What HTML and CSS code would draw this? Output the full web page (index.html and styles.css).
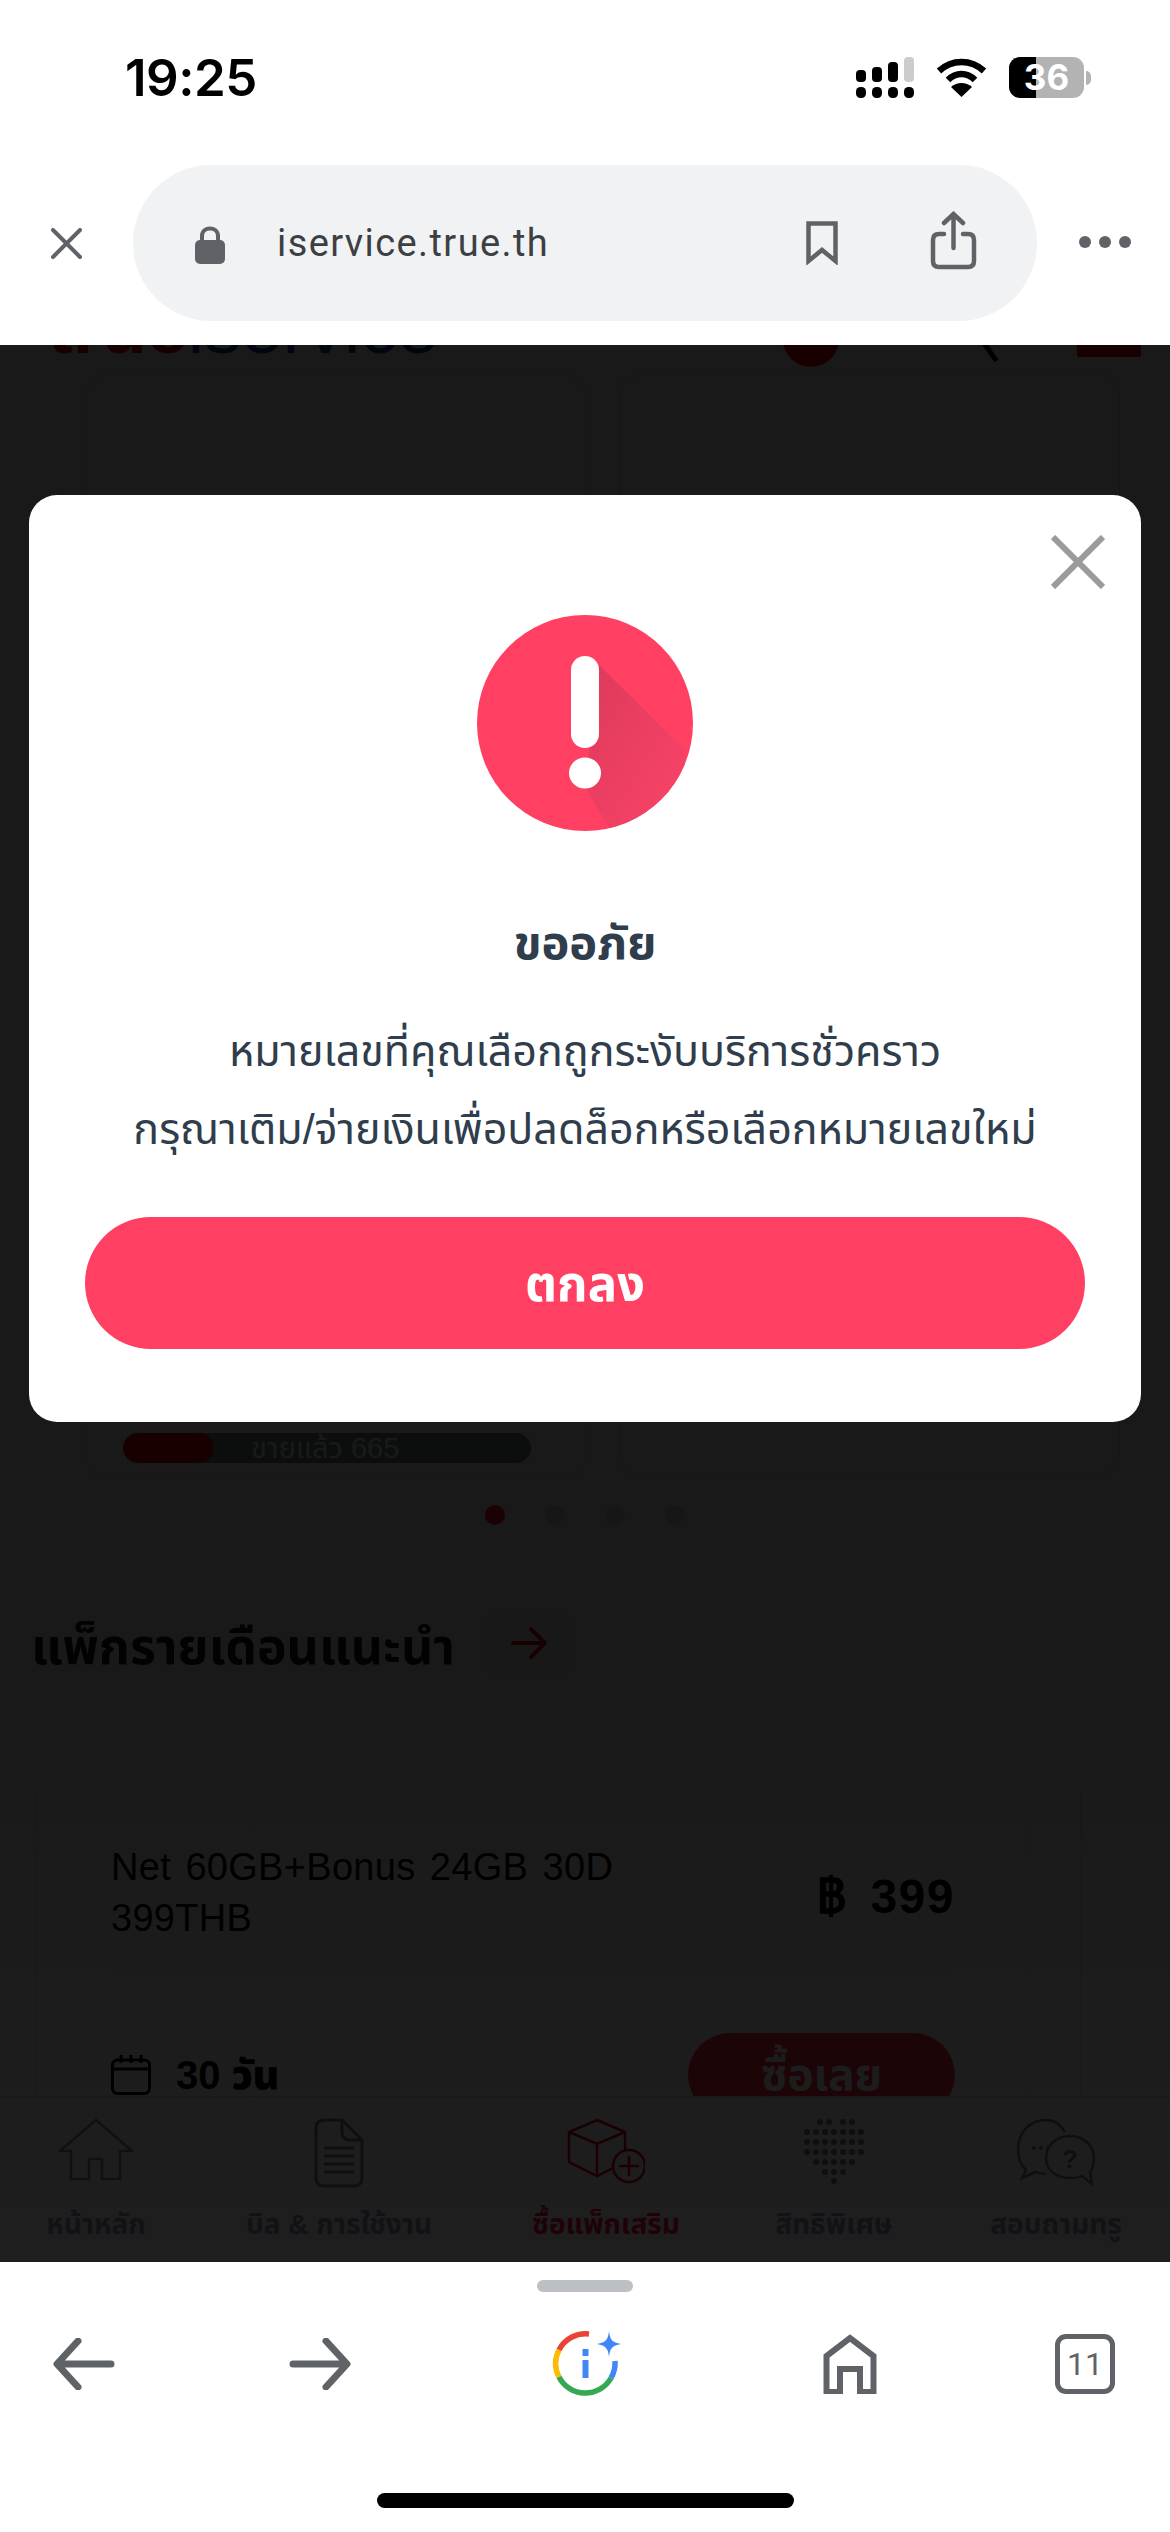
FILE: index.html
```html
<!DOCTYPE html>
<html lang="th">
<head>
<meta charset="utf-8">
<title>iservice.true.th</title>
<link rel="stylesheet" href="styles.css">
</head>
<body>
<div class="phone">
  <header class="status">
    <span class="clock">19:25</span>
    <div class="status-icons">
      <svg class="signal" width="58" height="41" viewBox="0 0 58 41"><g fill="#000"><rect x="0" y="13" width="10" height="12" rx="4"/><rect x="16" y="10" width="10" height="15" rx="4"/><rect x="32" y="5" width="10" height="20" rx="4"/><rect x="48" y="0" width="10" height="25" rx="4" fill="#ccc"/><rect x="0" y="30" width="10" height="11" rx="4.5"/><rect x="16" y="30" width="10" height="11" rx="4.5"/><rect x="32" y="30" width="10" height="11" rx="4.5"/><rect x="48" y="30" width="10" height="11" rx="4.5"/></g></svg>
      <svg class="wifi" width="51" height="39" viewBox="0 0 51 39"><g fill="none" stroke="#000" stroke-width="6.5"><path d="M3 13C16 1 35 1 48 13"/><path d="M12 22C20 14 31 14 39 22"/></g><path d="M25.500 39L15 29C21 23.500 30 23.500 36 29Z" fill="#000"/></svg>
      <div class="battery"><div class="battery-body">36</div><span class="battery-nub"></span></div>
    </div>
  </header>

  <div class="addressbar">
    <svg class="x-icon" width="31" height="31" viewBox="0 0 31 31"><path d="M2 2L29 29M29 2L2 29" stroke="#5f6368" stroke-width="4" stroke-linecap="round"/></svg>
    <div class="pill">
      <svg class="lock" width="30" height="38" viewBox="0 0 30 38"><path d="M7 17V10C7 0 23 0 23 10V17" fill="none" stroke="#5f6368" stroke-width="4"/><rect y="14" width="30" height="24" rx="5" fill="#5f6368"/></svg>
      <span class="url">iservice.true.th</span>
      <svg class="bookmark" width="32" height="44" viewBox="0 0 32 44"><path d="M2.500 2.500H29.500V40L16 29L2.500 40Z" fill="none" stroke="#5f6368" stroke-width="4.500"/></svg>
      <svg class="share" width="47" height="59" viewBox="0 0 47 59"><g fill="none" stroke="#5f6368" stroke-width="4.500" stroke-linecap="round"><path d="M14 23H9C5 23 3 25 3 29V50C3 54 5 56 9 56H38C42 56 44 54 44 50V29C44 25 42 23 38 23H33"/><path d="M23.500 37V4M14 12L23.500 3L33 12"/></g></svg>
    </div>
    <div class="more"><i></i><i></i><i></i></div>
  </div>

  <main class="viewport">
    <div class="page">
      <div class="site-header">
        <span class="logo"><b class="logo-true">true</b><b class="logo-i">iservice</b></span>
        <div class="header-tools">
          <span class="hd-circle"></span>
          <span class="hd-search"></span>
          <span class="hd-user"></span>
        </div>
      </div>

      <section class="carousel">
        <div class="deal-card">
          <div class="sold"><span class="sold-fill"></span><span class="sold-label">ขายแล้ว 665</span></div>
        </div>
        <div class="deal-card deal-card-next"></div>
      </section>
      <div class="dots"><i class="on"></i><i></i><i></i><i></i></div>

      <div class="section-head">
        <h2>แพ็กรายเดือนแนะนำ</h2>
        <span class="go"><svg width="36" height="32" viewBox="0 0 36 32"><path d="M2 16H33M20 2L34 16L20 30" fill="none" stroke="#e00000" stroke-width="4" stroke-linecap="round"/></svg></span>
      </div>

      <div class="plans">
        <article class="plan">
          <div class="plan-top">
            <p class="plan-name">Net 60GB+Bonus 24GB 30D<br>399THB</p>
            <b class="plan-price">฿ 399</b>
          </div>
          <div class="plan-bottom">
            <div class="plan-days">
              <svg width="40" height="40" viewBox="0 0 40 40"><g fill="none" stroke="#000" stroke-width="3"><rect x="1.500" y="5" width="37" height="33.500" rx="5"/><path d="M1.500 14H38.500M10 0V8M20 0V8M30 0V8"/></g></svg>
              <b>30 วัน</b>
            </div>
            <span class="buy">ซื้อเลย</span>
          </div>
        </article>
        <article class="plan plan-next"></article>
      </div>
    </div>

    <nav class="tabbar">
      <a class="tab">
        <svg width="76" height="64" viewBox="0 0 76 64"><path d="M38 2L74 33H62V61H44V41H31V61H13V33H2Z" fill="none" stroke="#909090" stroke-width="2.500"/></svg>
        <span>หน้าหลัก</span>
      </a>
      <a class="tab">
        <svg width="50" height="70" viewBox="0 0 50 70"><path d="M2 10C2 5 5 2 10 2H28L48 22V60C48 65 45 68 40 68H10C5 68 2 65 2 60Z" fill="none" stroke="#808080" stroke-width="3"/><path d="M28 2V14C28 19 31 22 36 22H48" fill="none" stroke="#808080" stroke-width="3"/><path d="M10 30H40M10 38H40M10 46H40M10 54H40" stroke="#808080" stroke-width="3"/></svg>
        <span>บิล &amp; การใช้งาน</span>
      </a>
      <a class="tab tab-on">
        <svg width="78" height="66" viewBox="0 0 78 66"><g fill="none" stroke="#e00000" stroke-width="2.500"><path d="M30 2L58 14V44L30 58L2 44V14ZM2 14L30 26L58 14M30 26V58"/><circle cx="62" cy="48" r="16" fill="#fff"/><path d="M62 38V58M52 48H72"/></g></svg>
        <span>ซื้อแพ็กเสริม</span>
      </a>
      <a class="tab">
        <svg width="66" height="66" viewBox="0 0 66 66"><g fill="#808080"><circle cx="19" cy="4" r="3"/><circle cx="28" cy="4" r="3"/><circle cx="42" cy="4" r="3"/><circle cx="51" cy="4" r="3"/><circle cx="6" cy="14" r="3"/><circle cx="15" cy="14" r="3"/><circle cx="24" cy="14" r="3"/><circle cx="33" cy="14" r="3"/><circle cx="42" cy="14" r="3"/><circle cx="51" cy="14" r="3"/><circle cx="60" cy="14" r="3"/><circle cx="6" cy="24" r="3"/><circle cx="15" cy="24" r="3"/><circle cx="24" cy="24" r="3"/><circle cx="33" cy="24" r="3"/><circle cx="42" cy="24" r="3"/><circle cx="51" cy="24" r="3"/><circle cx="60" cy="24" r="3"/><circle cx="6" cy="34" r="3"/><circle cx="15" cy="34" r="3"/><circle cx="24" cy="34" r="3"/><circle cx="33" cy="34" r="3"/><circle cx="42" cy="34" r="3"/><circle cx="51" cy="34" r="3"/><circle cx="60" cy="34" r="3"/><circle cx="15" cy="44" r="3"/><circle cx="24" cy="44" r="3"/><circle cx="33" cy="44" r="3"/><circle cx="42" cy="44" r="3"/><circle cx="51" cy="44" r="3"/><circle cx="24" cy="54" r="3"/><circle cx="33" cy="54" r="3"/><circle cx="42" cy="54" r="3"/><circle cx="33" cy="63" r="3"/></g></svg>
        <span>สิทธิพิเศษ</span>
      </a>
      <a class="tab">
        <svg width="80" height="70" viewBox="0 0 80 70"><g fill="none" stroke="#808080" stroke-width="2.500"><path d="M30 56C27 56 24 56 20 54L6 60L10 52C6 48 2 42 2 32C2 14 14 2 30 2C38 2 45 7 49 14"/><path d="M54 18C40 18 30 28 30 40C30 52 40 60 54 60C58 60 62 60 66 58L76 66L74 54C77 50 78 45 78 40C78 28 68 18 54 18Z"/></g><text x="54" y="50" class="qmark">?</text><g fill="#808080"><circle cx="18" cy="30" r="2"/><circle cx="25" cy="30" r="2"/><circle cx="32" cy="30" r="2"/></g></svg>
        <span>สอบถามทรู</span>
      </a>
    </nav>

    <div class="overlay">
      <div class="modal">
        <div class="modal-close">
          <svg width="54" height="54" viewBox="0 0 54 54"><path d="M2 2L52 52M52 2L2 52" stroke="#9b9b9b" stroke-width="6"/></svg>
        </div>
        <svg class="alert" width="216" height="216" viewBox="0 0 216 216">
          <defs>
            <clipPath id="disc"><circle cx="108" cy="108" r="108"/></clipPath>
            <linearGradient id="shade" x1="0" y1="0" x2="1" y2="1"><stop offset="0" stop-color="#dc3a5a"/><stop offset="1" stop-color="#fb4468"/></linearGradient>
          </defs>
          <circle cx="108" cy="108" r="108" fill="#ff4062"/>
          <path d="M122 50L208 135V216H134L108 172Z" fill="url(#shade)" clip-path="url(#disc)"/>
          <rect x="94" y="41" width="28" height="92" rx="14" fill="#fff"/>
          <ellipse cx="108" cy="158" rx="16" ry="15.500" fill="#fff"/>
        </svg>
        <h1 class="modal-title">ขออภัย</h1>
        <p class="modal-text">หมายเลขที่คุณเลือกถูกระงับบริการชั่วคราว<br>กรุณาเติม/จ่ายเงินเพื่อปลดล็อกหรือเลือกหมายเลขใหม่</p>
        <button class="modal-ok">ตกลง</button>
      </div>
    </div>
  </main>

  <footer class="toolbar">
    <span class="handle"></span>
    <div class="tools">
      <svg width="62" height="52" viewBox="0 0 62 52"><path d="M58 26H5M25 3L4 26L25 49" fill="none" stroke="#5f6368" stroke-width="7" stroke-linecap="round" stroke-linejoin="round"/></svg>
      <svg width="62" height="52" viewBox="0 0 62 52"><path d="M4 26H57M37 3L58 26L37 49" fill="none" stroke="#5f6368" stroke-width="7" stroke-linecap="round" stroke-linejoin="round"/></svg>
      <svg width="70" height="70" viewBox="0 0 70 70"><g fill="none" stroke-width="5.500"><path d="M38 5A29.500 29.500 0 0 0 8 21" stroke="#ea4335"/><path d="M8 21A29.500 29.500 0 0 0 8 48" stroke="#fbbc04"/><path d="M8 48A29.500 29.500 0 0 0 60 49" stroke="#34a853"/><path d="M60 49A29.500 29.500 0 0 0 64 32" stroke="#4285f4"/></g><path d="M58 2C59 11 61 13 70 15C61 17 59 19 58 28C57 19 55 17 46 15C55 13 57 11 58 2Z" fill="#4285f4"/><rect x="31.500" y="20" width="6" height="7" fill="#4285f4"/><rect x="31.500" y="31" width="6" height="18" fill="#4285f4"/></svg>
      <svg width="54" height="60" viewBox="0 0 54 60"><path d="M3.500 58V22L27 4L50.500 22V58H37V35H17V58Z" fill="none" stroke="#5f6368" stroke-width="6"/></svg>
      <div class="tabcount">11</div>
    </div>
    <span class="home-bar"></span>
  </footer>
</div>
</body>
</html>
```
FILE: styles.css
```css
* { box-sizing: border-box; }
html, body { margin: 0; padding: 0; }
body {
  width: 1170px;
  height: 2532px;
  overflow: hidden;
  background: #fff;
  font-family: "Inter", "Liberation Sans", "Noto Sans Thai", "Noto Sans", sans-serif;
}
.phone {
  width: 1170px;
  height: 2532px;
  display: flex;
  flex-direction: column;
}

/* status bar */
.status {
  height: 165px;
  flex: none;
  display: flex;
  align-items: flex-start;
  justify-content: space-between;
  padding: 50px 79px 0 125px;
}
.clock {
  font: 600 51px/56px "Inter", sans-serif;
  letter-spacing: -.5px;
  color: #000;
}
.status-icons {
  display: flex;
  align-items: center;
  gap: 22px;
  padding-top: 7px;
}
.battery { display: flex; align-items: center; gap: 2px; }
.battery-body {
  width: 75px;
  height: 41px;
  border-radius: 11px;
  background: linear-gradient(90deg, #000 36%, #b3b3b3 36%);
  color: #fff;
  font: 700 35px/41px "Inter", sans-serif;
  text-align: center;
}
.battery-nub {
  width: 5px;
  height: 14px;
  border-radius: 0 7px 7px 0;
  background: #b3b3b3;
}

/* address bar */
.addressbar {
  height: 180px;
  flex: none;
  display: flex;
  align-items: flex-start;
  padding-left: 51px;
}
.x-icon { margin-top: 63px; flex: none; }
.pill {
  width: 904px;
  height: 156px;
  margin-left: 51px;
  flex: none;
  background: #f1f2f4;
  border-radius: 78px;
  display: flex;
  align-items: center;
  padding-left: 62px;
}
.lock { flex: none; margin-top: 3px; }
.url {
  margin-left: 52px;
  width: 529px;
  font: 400 38px/46px "Roboto", sans-serif;
  letter-spacing: 1.4px;
  color: #3c4043;
}
.bookmark { flex: none; }
.share { flex: none; margin-left: 92px; margin-top: -6px; }
.more {
  display: flex;
  gap: 8px;
  margin: 71px 0 0 42px;
}
.more i { width: 12px; height: 12px; border-radius: 50%; background: #5f6368; }

/* dimmed page */
.viewport {
  flex: 1;
  min-height: 0;
  position: relative;
  overflow: hidden;
  display: flex;
  flex-direction: column;
  background: #fff;
}
.page { flex: 1; min-height: 0; overflow: hidden; }
.site-header {
  height: 30px;
  display: flex;
  justify-content: space-between;
  padding: 0 29px 0 48px;
  overflow: hidden;
}
.logo {
  display: block;
  margin-top: -54px;
  font: 700 74px/74px "Liberation Sans", sans-serif;
  white-space: nowrap;
}
.logo-true { color: #ff0000; }
.logo-i { color: #0a3d91; font-weight: 400; }
.header-tools { display: flex; align-items: flex-start; }
.hd-circle {
  width: 56px; height: 56px; margin-top: -34px;
  border-radius: 50%; background: #ff0000;
}
.hd-search {
  width: 5px; height: 24px; margin: -6px 0 0 148px;
  background: #000; transform: rotate(-35deg);
}
.hd-user {
  width: 64px; height: 12px; margin-left: 85px;
  background: #ff0000; border-radius: 0 0 2px 2px;
}

.carousel {
  height: 1100px;
  display: flex;
  gap: 34px;
  padding-left: 86px;
}
.deal-card {
  width: 500px;
  height: 1100px;
  flex: none;
  border: 1px solid #e4e4e4;
  border-radius: 18px;
  display: flex;
  flex-direction: column;
  justify-content: flex-end;
  padding: 0 36px 11px;
}
.sold {
  height: 30px;
  width: 408px;
  border-radius: 15px;
  background: #6f8f88;
  display: flex;
  align-items: center;
  overflow: hidden;
}
.sold-fill { width: 91px; height: 100%; background: #ff0000; border-radius: 15px; flex: none; }
.sold-label {
  margin-left: 37px;
  font: 400 29px/30px "Liberation Sans", "Noto Sans Thai", sans-serif;
  color: #fff;
}
.dots {
  display: flex;
  gap: 40px;
  justify-content: center;
  padding: 30px 0 0;
}
.dots i { width: 20px; height: 20px; border-radius: 50%; background: #dcdcdc; }
.dots i.on { background: #ff0f3c; }

.section-head {
  display: flex;
  align-items: center;
  gap: 27px;
  padding: 87px 0 0 31px;
  height: 157px;
}
.section-head h2 {
  margin: 0;
  font: 700 50px/64px "Liberation Sans", "Noto Sans Thai", sans-serif;
  color: #0b1320;
  white-space: nowrap;
}
.go {
  width: 94px;
  height: 62px;
  margin-top: -8px;
  border-radius: 18px;
  background: #fff0f2;
  display: flex;
  align-items: center;
  justify-content: center;
}

.plans {
  display: flex;
  gap: 50px;
  padding: 83px 0 0 36px;
}
.plan {
  width: 994px;
  height: 420px;
  flex: none;
  border: 1px solid #e4e4e4;
  border-radius: 28px;
  padding: 76px 74px 0;
}
.plan-next { width: 300px; }
.plan-top {
  display: flex;
  justify-content: space-between;
  align-items: center;
  border-bottom: 1px solid #e4e4e4;
  padding-bottom: 28px;
}
.plan-name {
  margin: 0;
  font: 400 38px/51px "Liberation Sans", sans-serif;
  letter-spacing: .3px;
  word-spacing: 3.5px;
  color: #000;
}
.plan-price {
  margin-top: 8px;
  font: 700 48px/56px "Liberation Sans", sans-serif;
  letter-spacing: 1.5px;
  word-spacing: 8px;
  color: #000;
}
.plan-bottom {
  display: flex;
  justify-content: space-between;
  align-items: center;
  padding-top: 60px;
}
.plan-days {
  display: flex;
  align-items: center;
  gap: 25px;
  font: 700 40px/44px "Liberation Sans", "Noto Sans Thai", sans-serif;
  color: #000;
}
.buy {
  width: 267px;
  height: 84px;
  border-radius: 42px;
  background: #ff2a3c;
  color: #fff;
  font: 700 44px/84px "Liberation Sans", "Noto Sans Thai", sans-serif;
  text-align: center;
}

.tabbar {
  height: 166px;
  flex: none;
  background: #fff;
  border-top: 1px solid #e0e0e0;
  display: grid;
  grid-template-columns: 192px 294px 240px 216px 228px;
  padding-top: 21px;
}
.tab {
  display: flex;
  flex-direction: column;
  align-items: center;
  height: 124px;
  justify-content: space-between;
}
.tab span {
  font: 700 28px/34px "Liberation Sans", "Noto Sans Thai", sans-serif;
  color: #8a9cc0;
  white-space: nowrap;
}
.tab-on span { color: #ff0f3c; }
.qmark { font: 700 26px "Liberation Sans", sans-serif; text-anchor: middle; fill: #808080; }

/* overlay and modal */
.overlay {
  position: absolute;
  inset: 0;
  background: linear-gradient(180deg, rgba(0, 0, 0, .9) 0, rgba(0, 0, 0, .9) 70%, rgba(0, 0, 0, .882) 100%);
  padding: 150px 29px 0;
}
.modal {
  height: 927px;
  background: #fff;
  border-radius: 28px;
  display: flex;
  flex-direction: column;
  align-items: center;
  padding-top: 120px;
  position: relative;
}
.modal-close {
  position: absolute;
  top: 40px;
  right: 36px;
  line-height: 0;
}
.alert { flex: none; }
.modal-title {
  margin: 82px 0 0;
  font: 700 47px/60px "Liberation Sans", "Noto Sans Thai", sans-serif;
  color: #2f3d4c;
}
.modal-text {
  margin: 39px 0 0;
  font: 400 43px/78px "Liberation Sans", "Noto Sans Thai", sans-serif;
  color: #2f3d4c;
  text-align: center;
  white-space: nowrap;
}
.modal-ok {
  width: 1000px;
  height: 132px;
  margin-top: 49px;
  border: 0;
  border-radius: 66px;
  background: #ff4062;
  color: #fff;
  font: 700 49px/132px "Liberation Sans", "Noto Sans Thai", sans-serif;
}

/* bottom toolbar */
.toolbar {
  height: 270px;
  flex: none;
  background: #fff;
  display: flex;
  flex-direction: column;
  align-items: center;
  padding-top: 18px;
}
.handle { width: 96px; height: 12px; border-radius: 6px; background: #bcbfc4; }
.tools {
  width: 100%;
  height: 76px;
  margin-top: 34px;
  display: grid;
  grid-template-columns: 168px 304px 228px 300px 170px;
  align-items: center;
  justify-items: center;
}
.tabcount {
  width: 60px;
  height: 60px;
  border: 5px solid #5f6368;
  border-radius: 11px;
  color: #5f6368;
  font: 400 32px/50px "Roboto", sans-serif;
  text-align: center;
}
.home-bar {
  width: 417px;
  height: 15px;
  margin-top: 91px;
  border-radius: 8px;
  background: #000;
}
```
